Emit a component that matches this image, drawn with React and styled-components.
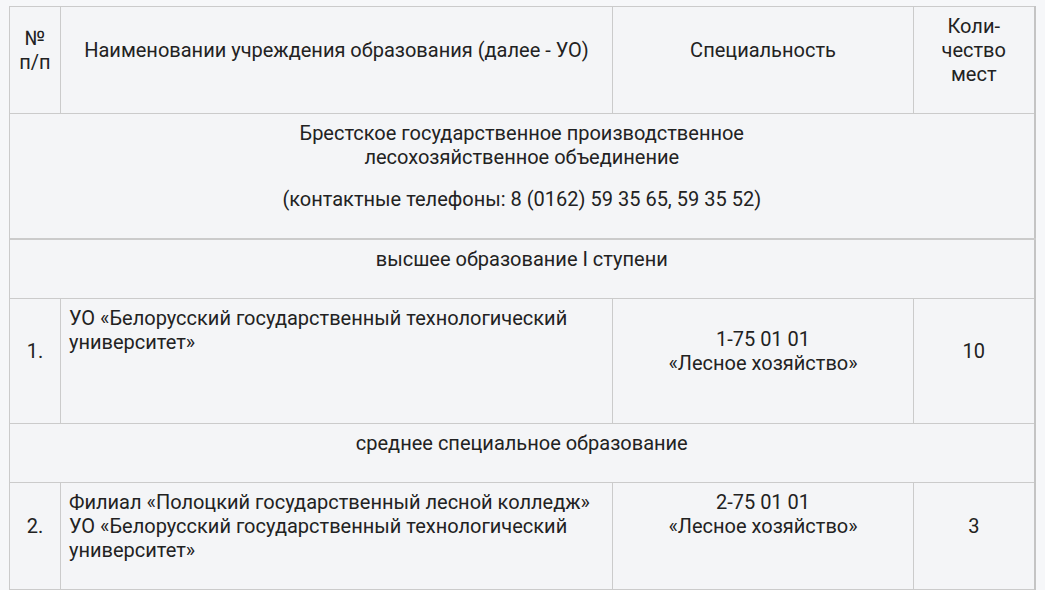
import React from "react";
import styled, { createGlobalStyle } from "styled-components";

const GlobalStyle = createGlobalStyle`
  html, body {
    margin: 0;
    padding: 0;
    background-color: #f6f7f9;
  }
  body {
    font-family: Roboto, "Noto Sans", "Liberation Sans", sans-serif;
    color: #222222;
  }
`;

const Page = styled.div`
  padding: 6px 0 0 9px;
  width: 1025px;
`;

const Table = styled.table`
  width: 1025px;
  table-layout: fixed;
  border-collapse: collapse;
  background-color: #f4f5f7;
  border-top: 1px solid #cbcbcb;
  border-left: 1px solid #cbcbcb;
  border-right: 2px solid #c4c4c4;
  font-size: 20px;
  line-height: 24px;
`;

const Row = styled.tr`
  border-bottom: ${({ $thick }) => ($thick ? "2px" : "1px")} solid #cbcbcb;
`;

const Cell = styled.td`
  padding: 7px 8px 9px;
  border-right: 1px solid #cbcbcb;
  text-align: ${({ $align }) => $align || "center"};
  vertical-align: ${({ $valign }) => $valign || "middle"};
`;

const Para = styled.p`
  margin: 0 0 18px;
  min-height: 24px;
`;

const rows = [
  {
    num: "1.",
    name: [
      <>
        УО «Белорусский государственный технологический
        <br />
        университет»
      </>,
      "",
    ],
    code: "1-75 01 01",
    spec: "«Лесное хозяйство»",
    specValign: "middle",
    seats: "10",
  },
];

const App = () => {
  return (
    <>
      <GlobalStyle />
      <Page>
        <Table>
          <colgroup>
            <col style={{ width: "51px" }} />
            <col style={{ width: "552px" }} />
            <col style={{ width: "301px" }} />
            <col style={{ width: "121px" }} />
          </colgroup>
          <tbody>
            <Row>
              <Cell>
                <Para>
                  №<br />п/п
                </Para>
              </Cell>
              <Cell>
                <Para>Наименовании учреждения образования (далее - УО)</Para>
              </Cell>
              <Cell>
                <Para>Специальность</Para>
              </Cell>
              <Cell>
                <Para>
                  Коли-
                  <br />
                  чество
                  <br />
                  мест
                </Para>
              </Cell>
            </Row>
            <Row $thick>
              <Cell colSpan={4}>
                <Para>
                  Брестское государственное производственное
                  <br />
                  лесохозяйственное объединение
                </Para>
                <Para>(контактные телефоны: 8 (0162) 59 35 65, 59 35 52)</Para>
              </Cell>
            </Row>
            <Row>
              <Cell colSpan={4}>
                <Para>высшее образование I ступени</Para>
              </Cell>
            </Row>
            {rows.map((r) => (
              <Row key={r.num}>
                <Cell>
                  <Para>{r.num}</Para>
                </Cell>
                <Cell $align="left" $valign="top">
                  {r.name.map((n, i) => (
                    <Para key={i}>{n}</Para>
                  ))}
                </Cell>
                <Cell $valign={r.specValign}>
                  <Para>
                    {r.code}
                    <br />
                    {r.spec}
                  </Para>
                </Cell>
                <Cell>
                  <Para>{r.seats}</Para>
                </Cell>
              </Row>
            ))}
            <Row>
              <Cell colSpan={4}>
                <Para>среднее специальное образование</Para>
              </Cell>
            </Row>
            <Row>
              <Cell>
                <Para>2.</Para>
              </Cell>
              <Cell $align="left" $valign="top">
                <Para>
                  Филиал «Полоцкий государственный лесной колледж»
                  <br />
                  УО «Белорусский государственный технологический
                  <br />
                  университет»
                </Para>
              </Cell>
              <Cell $valign="top">
                <Para>
                  2-75 01 01
                  <br />
                  «Лесное хозяйство»
                </Para>
              </Cell>
              <Cell>
                <Para>3</Para>
              </Cell>
            </Row>
          </tbody>
        </Table>
      </Page>
    </>
  );
};

export default App;
